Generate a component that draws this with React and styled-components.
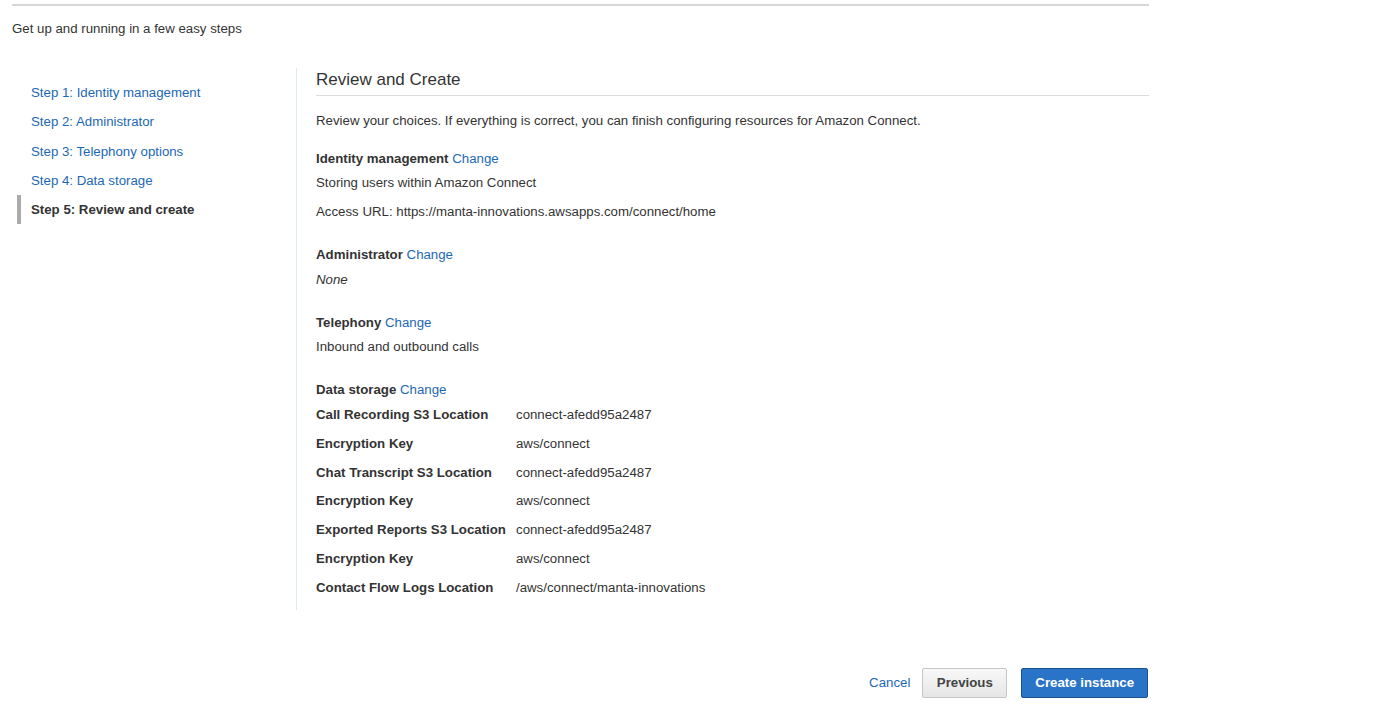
import React from "react";
import styled, { createGlobalStyle } from "styled-components";

const GlobalStyle = createGlobalStyle`
  body {
    margin: 0;
    background: #fff;
    font-family: "Liberation Sans", Arial, sans-serif;
    font-size: 13.25px;
    color: #333;
  }
`;

const Page = styled.div`
  width: 1137px;
  padding: 4px 0 0 12px;
`;

const TopRule = styled.div`
  height: 2px;
  background: #d6d6d6;
`;

const Intro = styled.div`
  margin-top: 13px;
  line-height: 20px;
  color: #333;
`;

const Layout = styled.div`
  display: flex;
  margin-top: 29px;
`;

const Sidebar = styled.nav`
  width: 284px;
  padding-top: 10px;
  border-right: 1px solid #dcebf6;
`;

const NavItem = styled.div`
  margin-left: 5px;
  padding: 5px 0 5px 10px;
  line-height: 19.3px;
  border-left: 4px solid ${(p) => (p.$active ? "#aaa" : "transparent")};
  color: ${(p) => (p.$active ? "#333" : "#1b68b5")};
  font-weight: ${(p) => (p.$active ? "bold" : "normal")};
`;

const Main = styled.main`
  flex: 1;
  padding: 1px 0 12px 19px;
`;

const Heading = styled.h2`
  margin: 0;
  font-size: 17px;
  font-weight: normal;
  line-height: 22px;
  padding-bottom: 4px;
  border-bottom: 1px solid #dcdcdc;
  color: #333;
`;

const Lead = styled.p`
  margin: 15px 0 0;
  line-height: 20px;
`;

const Section = styled.section`
  margin-top: ${(p) => p.$gap || 23}px;
`;

const Title = styled.div`
  line-height: 20px;
  font-weight: bold;
  color: #333;
`;

const Link = styled.a`
  font-weight: normal;
  color: #1b68b5;
  text-decoration: none;
  cursor: pointer;
`;

const Line = styled.div`
  margin-top: ${(p) => p.$gap || 4}px;
  line-height: 20px;
  font-style: ${(p) => (p.$italic ? "italic" : "normal")};
`;

const Grid = styled.div`
  display: grid;
  grid-template-columns: 200px 1fr;
  row-gap: 8.8px;
  margin-top: 5px;
  line-height: 20px;
`;

const Label = styled.div`
  font-weight: bold;
`;

const Footer = styled.div`
  display: flex;
  justify-content: flex-end;
  align-items: center;
  margin-top: 58px;
`;

const TextButton = styled.a`
  color: #1b68b5;
  margin-right: 12px;
  cursor: pointer;
`;

const Button = styled.button`
  height: 30px;
  margin-left: ${(p) => (p.$primary ? "14px" : "0")};
  margin-right: ${(p) => (p.$primary ? "1px" : "0")};
  padding: 0 ${(p) => (p.$primary ? "13px" : "13.5px")};
  border-radius: 2px;
  font-family: inherit;
  font-size: 13.25px;
  font-weight: bold;
  cursor: pointer;
  border: 1px solid ${(p) => (p.$primary ? "#1d5290" : "#c6c6c6")};
  background: ${(p) =>
    p.$primary ? "#2a74c8" : "linear-gradient(#f8f8f8, #e6e6e6)"};
  color: ${(p) => (p.$primary ? "#fff" : "#444")};
`;

const steps = [
  "Step 1: Identity management",
  "Step 2: Administrator",
  "Step 3: Telephony options",
  "Step 4: Data storage",
  "Step 5: Review and create",
];

const storage = [
  ["Call Recording S3 Location", "connect-afedd95a2487"],
  ["Encryption Key", "aws/connect"],
  ["Chat Transcript S3 Location", "connect-afedd95a2487"],
  ["Encryption Key", "aws/connect"],
  ["Exported Reports S3 Location", "connect-afedd95a2487"],
  ["Encryption Key", "aws/connect"],
  ["Contact Flow Logs Location", "/aws/connect/manta-innovations"],
];

export default function App() {
  return (
    <>
      <GlobalStyle />
      <Page>
        <TopRule />
        <Intro>Get up and running in a few easy steps</Intro>
        <Layout>
          <Sidebar>
            {steps.map((s, i) => (
              <NavItem key={s} $active={i === steps.length - 1}>
                {s}
              </NavItem>
            ))}
          </Sidebar>
          <Main>
            <Heading>Review and Create</Heading>
            <Lead>
              Review your choices. If everything is correct, you can finish configuring resources for
              Amazon Connect.
            </Lead>
            <Section $gap={18}>
              <Title>
                Identity management <Link>Change</Link>
              </Title>
              <Line>Storing users within Amazon Connect</Line>
              <Line $gap={9}>Access URL: https://manta-innovations.awsapps.com/connect/home</Line>
            </Section>
            <Section>
              <Title>
                Administrator <Link>Change</Link>
              </Title>
              <Line $gap={5} $italic>
                None
              </Line>
            </Section>
            <Section>
              <Title>
                Telephony <Link>Change</Link>
              </Title>
              <Line>Inbound and outbound calls</Line>
            </Section>
            <Section>
              <Title>
                Data storage <Link>Change</Link>
              </Title>
              <Grid>
                {storage.map(([k, v], i) => (
                  <React.Fragment key={i}>
                    <Label>{k}</Label>
                    <div>{v}</div>
                  </React.Fragment>
                ))}
              </Grid>
            </Section>
          </Main>
        </Layout>
        <Footer>
          <TextButton>Cancel</TextButton>
          <Button>Previous</Button>
          <Button $primary>Create instance</Button>
        </Footer>
      </Page>
    </>
  );
}
